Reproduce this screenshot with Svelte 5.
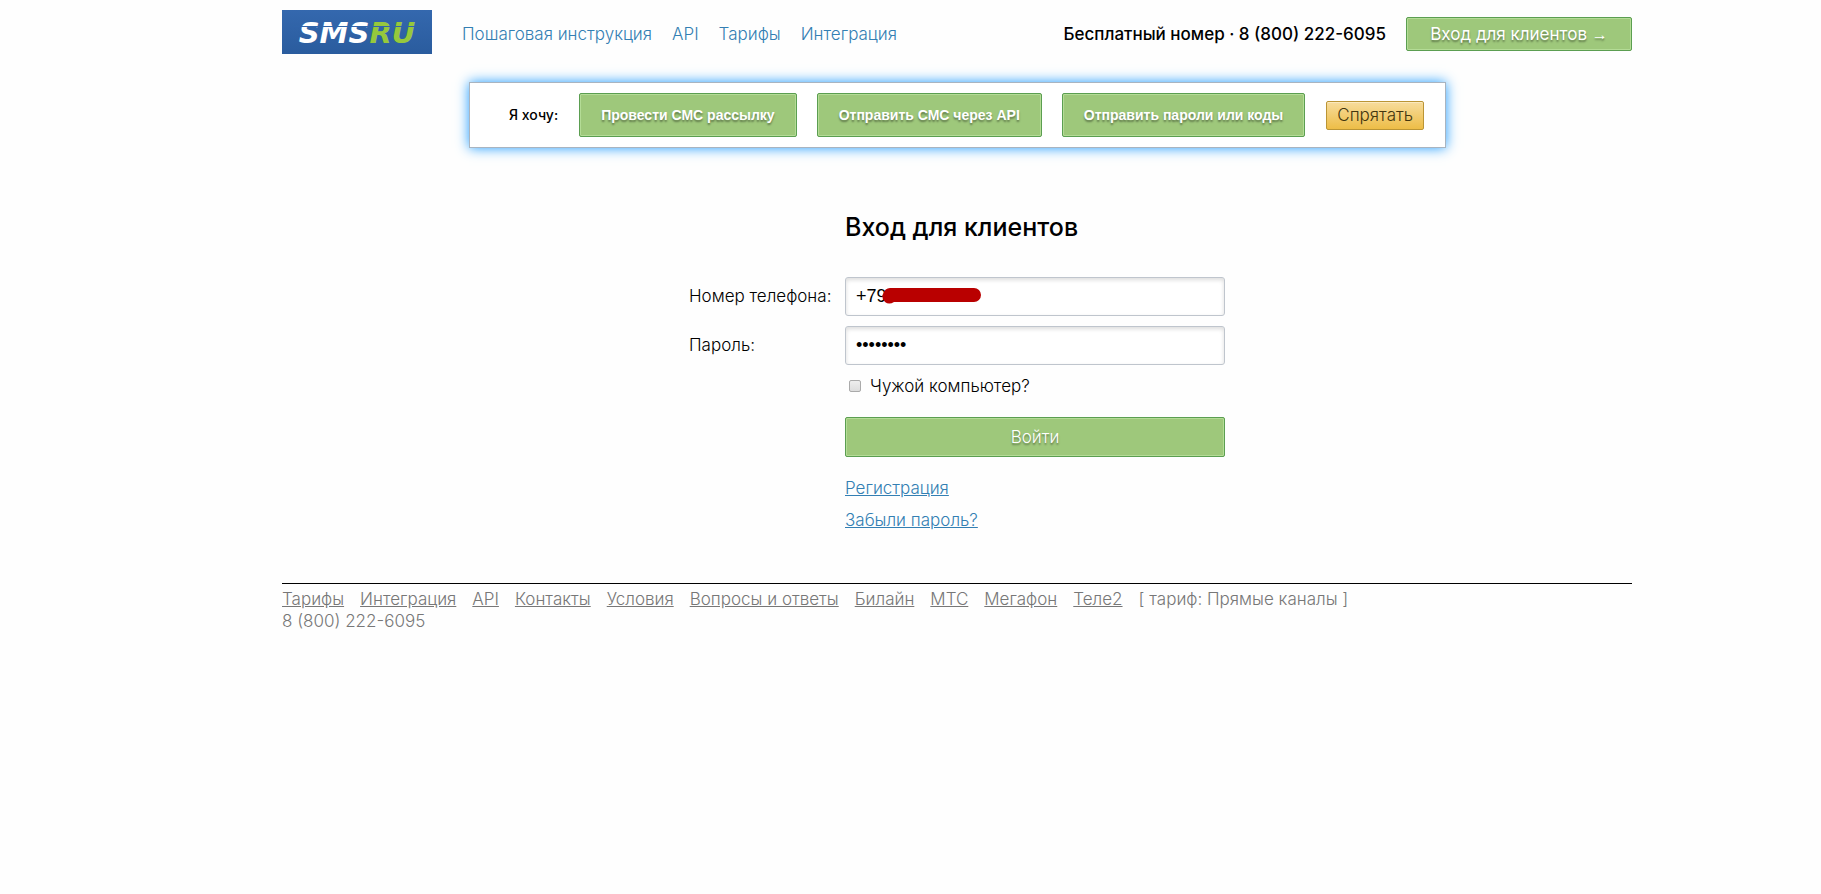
<script lang="ts">
    let phone = $state("+79");
    let password = $state("password");
    let foreign = $state(false);
    let showHint = $state(true);

    const menu = ["Пошаговая инструкция", "API", "Тарифы", "Интеграция"];
    const wishes = [
        "Провести СМС рассылку",
        "Отправить СМС через API",
        "Отправить пароли или коды",
    ];
    const footerLinks = [
        "Тарифы",
        "Интеграция",
        "API",
        "Контакты",
        "Условия",
        "Вопросы и ответы",
        "Билайн",
        "МТС",
        "Мегафон",
        "Теле2",
    ];

    function submit(e: Event) {
        e.preventDefault();
    }
</script>

<div class="page">
    <header>
        <a href="#home" class="logo" aria-label="SMS.RU"><span>SMS</span><span class="ru">RU</span></a>
        <nav>
            {#each menu as item}
                <a href="#menu">{item}</a>
            {/each}
        </nav>
        <span class="free">Бесплатный номер · 8 (800) 222-6095</span>
        <button type="button" class="green enter">Вход для клиентов <span class="arrow">→</span></button>
    </header>

    {#if showHint}
        <section class="hint">
            <span class="want">Я хочу:</span>
            {#each wishes as wish}
                <button type="button" class="green wish">{wish}</button>
            {/each}
            <button type="button" class="hide" onclick={() => (showHint = false)}>Спрятать</button>
        </section>
    {/if}

    <main>
        <form onsubmit={submit}>
            <h1>Вход для клиентов</h1>
            <label for="phone">Номер телефона:</label>
            <div class="field">
                <input id="phone" type="text" bind:value={phone} />
                <svg class="marker" width="100" height="17" viewBox="0 0 100 17" aria-hidden="true">
                    <path d="M8 1H92a7 7 0 0 1 0 14H12q-5 3-9 0-4-4-2-8Q3 1 8 1z" fill="#b90000" />
                </svg>
            </div>
            <label for="password">Пароль:</label>
            <div class="field">
                <input id="password" type="password" bind:value={password} />
            </div>
            <label class="check">
                <input type="checkbox" bind:checked={foreign} />
                Чужой компьютер?
            </label>
            <button type="submit" class="green submit">Войти</button>
            <div class="links">
                <a href="#register">Регистрация</a>
                <a href="#forgot">Забыли пароль?</a>
            </div>
        </form>
    </main>

    <footer>
        <div class="footer-links">
            {#each footerLinks as item}
                <a href="#footer">{item}</a>
            {/each}
            <span>[ тариф: Прямые каналы ]</span>
        </div>
        <div>8 (800) 222-6095</div>
    </footer>
</div>

<style>
    :global(body) {
        margin: 0;
        background: #fefefe;
    }

    .page {
        box-sizing: border-box;
        max-width: 1443px;
        margin: 0 auto;
        padding: 10px 0 0 93px;
        font-family: Inter, "Liberation Sans", sans-serif;
        font-size: 17px;
        font-weight: 300;
        line-height: 22px;
        color: #000;
    }

    a {
        color: #337fb3;
    }

    button,
    input {
        box-sizing: border-box;
        font: inherit;
    }

    button {
        cursor: pointer;
    }

    header {
        display: flex;
        align-items: center;
        height: 48px;
    }

    .logo {
        box-sizing: border-box;
        position: relative;
        display: flex;
        align-items: center;
        justify-content: center;
        align-self: flex-start;
        width: 150px;
        height: 44px;
        padding-top: 2px;
        background: linear-gradient(#3468ae, #2a5c9e);
        color: #fff;
        font-family: "DejaVu Sans", sans-serif;
        font-size: 29px;
        font-weight: bold;
        font-style: italic;
        text-decoration: none;
    }

    /* thin cut through the letters */
    .logo::after {
        content: "";
        position: absolute;
        left: 12px;
        right: 12px;
        top: 16px;
        height: 1px;
        background: #3064aa;
    }

    .ru {
        color: #96c83c;
    }

    nav {
        display: flex;
        gap: 20px;
        margin-left: 30px;
    }

    nav a {
        text-decoration: none;
    }

    .free {
        margin-left: auto;
        font-weight: 500;
    }

    .green {
        border: 1px solid #5b9e51;
        border-radius: 2px;
        background: #9ec87b;
        box-shadow: inset 0 0 0 1px #b4dc96;
        color: #fff;
        text-shadow: 0 2px 2px rgba(0, 0, 0, 0.4);
    }

    .enter {
        width: 226px;
        height: 34px;
        margin-left: 20px;
        padding: 0;
        font-weight: 400;
    }

    .arrow {
        font-family: "Liberation Sans", Arial, sans-serif;
        font-size: 16px;
    }

    .hint {
        box-sizing: border-box;
        display: flex;
        align-items: center;
        width: fit-content;
        margin: 24px 0 0 187px;
        padding: 10px 21px 10px 39px;
        border: 1px solid #a9b4c0;
        background: #fff;
        box-shadow: 0 0 12px #1e9cff;
    }

    .want {
        margin-right: 1px;
        font-size: 14px;
        font-weight: 500;
    }

    .wish {
        height: 44px;
        margin-left: 20px;
        padding: 0 21px;
        font-family: "Liberation Sans", Arial, sans-serif;
        font-size: 14px;
        font-weight: bold;
    }

    .hide {
        height: 29px;
        margin-left: 21px;
        padding: 0 10px;
        border: 1px solid #bb9535;
        border-radius: 2px;
        background: linear-gradient(#f7dc9c, #edbd47);
        box-shadow: inset 0 1px 0 #fbe9be;
        color: #43360f;
    }

    form {
        display: grid;
        grid-template-columns: 146px 380px;
        column-gap: 10px;
        width: fit-content;
        margin: 63px 0 0 407px;
    }

    h1 {
        grid-column: 2;
        margin: 0 0 34px;
        font-size: 25px;
        font-weight: 500;
        line-height: 32px;
    }

    label {
        align-self: center;
        padding-bottom: 12px;
        white-space: nowrap;
    }

    .field {
        position: relative;
        height: 49px;
    }

    .field input {
        width: 100%;
        height: 39px;
        padding: 0 10px;
        border: 1px solid #bfc5cd;
        border-radius: 3px;
        outline: 0;
        background: #fff;
        box-shadow: inset 0 2px 4px rgba(0, 0, 0, 0.14);
        font-family: "Liberation Sans", Arial, sans-serif;
        font-size: 18px;
        font-weight: 400;
        color: #000;
    }

    /* covers the rest of the number */
    .marker {
        position: absolute;
        left: 37px;
        top: 10px;
    }

    .check {
        grid-column: 2;
        display: flex;
        align-items: center;
        gap: 9px;
        padding: 0 0 0 4px;
    }

    .check input {
        appearance: none;
        width: 12px;
        height: 12px;
        margin: 0;
        border: 1px solid #aaa;
        border-radius: 2px;
        background: linear-gradient(#eee, #ddd);
    }

    .check input:checked {
        background: #337fb3;
    }

    .submit {
        grid-column: 2;
        height: 40px;
        margin-top: 20px;
    }

    .links {
        grid-column: 2;
        display: flex;
        flex-direction: column;
        align-items: flex-start;
        gap: 10px;
        margin-top: 20px;
    }

    footer {
        margin-top: 52px;
        padding-top: 4px;
        border-top: 1px solid #000;
        color: #777;
    }

    .footer-links {
        display: flex;
        flex-wrap: wrap;
        gap: 0 16px;
    }

    footer a {
        color: #777;
    }
</style>
